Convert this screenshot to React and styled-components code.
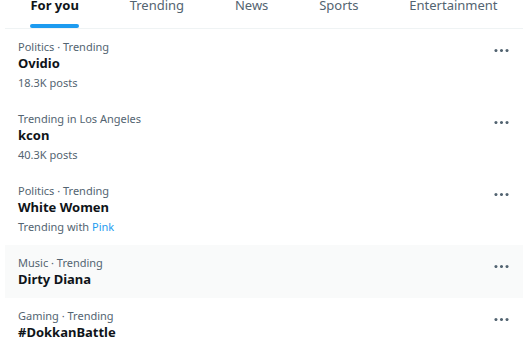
import styled, { createGlobalStyle } from "styled-components";

const GlobalStyle = createGlobalStyle`
  html, body {
    margin: 0;
    padding: 0;
    background: #ffffff;
    overflow: hidden;
  }
  body {
    font-family: "Noto Sans", "Open Sans", "Liberation Sans", sans-serif;
    color: #0f1419;
  }
`;

const Page = styled.div`
  width: 523px;
  height: 342px;
  padding-left: 5px;
  box-sizing: border-box;
  overflow: hidden;
`;

const TabBar = styled.nav`
  display: flex;
  height: 28px;
  border-bottom: 1px solid #eff3f4;
`;

const Tab = styled.div`
  flex: 1 1 auto;
  display: flex;
  flex-direction: column;
  align-items: center;
  font-size: 13px;
  font-weight: ${(p) => (p.$active ? 700 : 400)};
  color: ${(p) => (p.$active ? "#0f1419" : "#536471")};
`;

const TabLabel = styled.span`
  line-height: 20px;
  margin-top: -5px;
  white-space: nowrap;
`;

const Indicator = styled.div`
  margin-top: 9px;
  height: 4px;
  width: 100%;
  border-radius: 2px;
  background: #1d9bf0;
`;

const TrendRow = styled.div`
  display: flex;
  justify-content: space-between;
  align-items: flex-start;
  padding: 10px 12px 10px 13px;
  background: ${(p) => (p.$hover ? "#f9fafa" : "transparent")};
`;

const TrendBody = styled.div`
  display: flex;
  flex-direction: column;
`;

const Meta = styled.div`
  font-size: 11px;
  line-height: 16px;
  color: #536471;
  margin-top: ${(p) => (p.$sub ? "3px" : "0")};
`;

const Title = styled.div`
  font-size: 13px;
  line-height: 17px;
  font-weight: 700;
  color: #0f1419;
`;

const Link = styled.span`
  color: #1d9bf0;
`;

const MoreButton = styled.div`
  width: 19px;
  height: 19px;
  margin-top: 2px;
  color: #536471;

  svg {
    display: block;
    width: 19px;
    height: 19px;
    fill: currentColor;
  }
`;

const MoreIcon = () => (
  <MoreButton>
    <svg viewBox="0 0 24 24">
      <path d="M3 12c0-1.1.9-2 2-2s2 .9 2 2-.9 2-2 2-2-.9-2-2zm9 2c1.1 0 2-.9 2-2s-.9-2-2-2-2 .9-2 2 .9 2 2 2zm7 0c1.1 0 2-.9 2-2s-.9-2-2-2-2 .9-2 2 .9 2 2 2z" />
    </svg>
  </MoreButton>
);

const tabs = ["For you", "Trending", "News", "Sports", "Entertainment"];

const trends = [
  { meta: "Politics · Trending", title: "Ovidio", sub: "18.3K posts" },
  { meta: "Trending in Los Angeles", title: "kcon", sub: "40.3K posts" },
  { meta: "Politics · Trending", title: "White Women", with: "Pink" },
  { meta: "Music · Trending", title: "Dirty Diana", hover: true },
  { meta: "Gaming · Trending", title: "#DokkanBattle" },
];

const App = () => {
  return (
    <>
      <GlobalStyle />
      <Page>
        <TabBar>
          {tabs.map((t, i) => (
            <Tab key={t} $active={i === 0}>
              <TabLabel>
                {t}
                {i === 0 && <Indicator />}
              </TabLabel>
            </Tab>
          ))}
        </TabBar>
        {trends.map((t) => (
          <TrendRow key={t.title} $hover={t.hover}>
            <TrendBody>
              <Meta>{t.meta}</Meta>
              <Title>{t.title}</Title>
              {t.sub && <Meta $sub>{t.sub}</Meta>}
              {t.with && (
                <Meta $sub>
                  Trending with <Link>{t.with}</Link>
                </Meta>
              )}
            </TrendBody>
            <MoreIcon />
          </TrendRow>
        ))}
      </Page>
    </>
  );
};

export default App;
